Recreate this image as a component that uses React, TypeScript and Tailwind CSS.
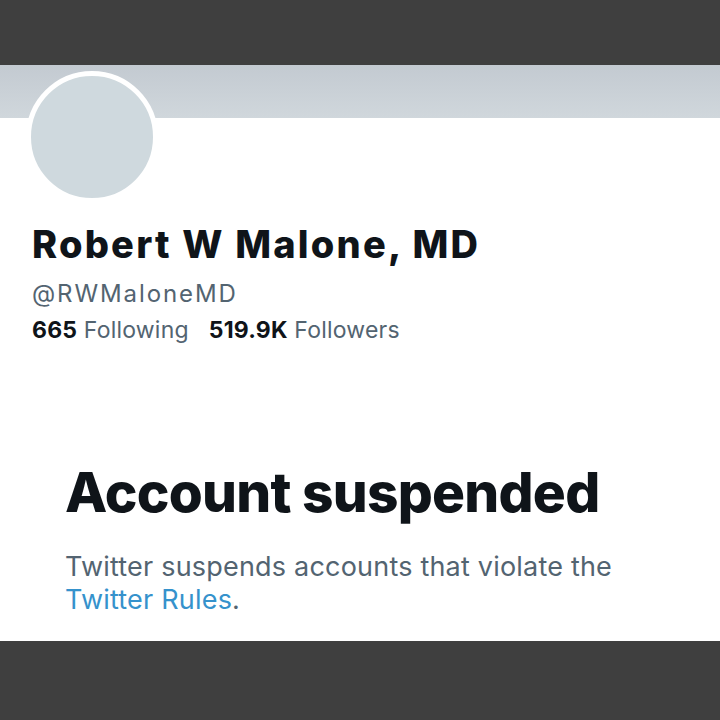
// Suspended profile screen: header banner, avatar, profile meta, and the
// suspension notice. Dark bars top and bottom are the screenshot frame.

const font = { fontFamily: 'Inter, "Liberation Sans", Arial, sans-serif' }

export default function App() {
  return (
    <div className="flex h-[720px] w-[720px] flex-col bg-white" style={font}>
      <div className="h-[65px] shrink-0 bg-[#3f3f3f]" />
      <div className="h-[53px] shrink-0 bg-gradient-to-b from-[#c3cad1] to-[#d0d7dc]" />
      <div className="flex flex-1 flex-col px-[32px]">
        <div className="-mt-[47px] -ml-[6px] h-[132px] w-[132px] rounded-full border-[5px] border-white bg-[#cfd9de]" />
        <h1 className="mt-[19px] text-[38px] font-extrabold leading-[44px] tracking-[2.2px] text-[#0f1419]">
          Robert W Malone, MD
        </h1>
        <p className="mt-[13px] text-[24px] leading-[30px] tracking-[1.9px] text-[#536471]">
          @RWMaloneMD
        </p>
        <div className="mt-[7px] flex gap-[20px] text-[23px] leading-[28px] tracking-[0.2px]">
          <span>
            <span className="font-bold text-[#0f1419]">665</span>{' '}
            <span className="text-[#536471]">Following</span>
          </span>
          <span>
            <span className="font-bold text-[#0f1419]">519.9K</span>{' '}
            <span className="text-[#536471]">Followers</span>
          </span>
        </div>
        <div className="mt-[116px] pl-[33px]">
          <h2 className="text-[55px] font-extrabold leading-[64px] tracking-[-0.75px] text-[#0f1419]">
            Account suspended
          </h2>
          <p className="mt-[26px] text-[27px] leading-[33px] tracking-[0.2px] text-[#536471]">
            Twitter suspends accounts that violate the
            <br />
            <span className="text-[#3592cc]">Twitter Rules</span>.
          </p>
        </div>
      </div>
      <div className="h-[79px] shrink-0 bg-[#3f3f3f]" />
    </div>
  )
}
